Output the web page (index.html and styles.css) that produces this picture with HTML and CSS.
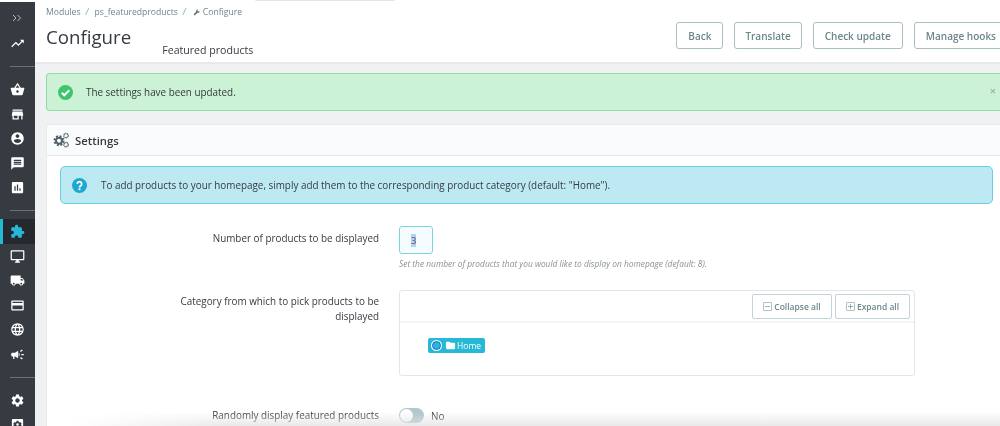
FILE: index.html
```html
<!DOCTYPE html>
<html>
<head>
    <meta charset="UTF-8">
    <title>Configure</title>
    <link rel="stylesheet" href="styles.css">
</head>
<body>
    <div class="app">
        <!-- Sol menu -->
        <nav class="sidebar">
            <div class="nav-item nav-toggle"><svg class="nav-icon nav-icon-line" viewBox="0 0 24 24"><path d="M4 6l6 6-6 6M13 6l6 6-6 6"/></svg></div>
            <div class="nav-item"><svg class="nav-icon" viewBox="0 0 24 24"><path d="M16 6l2.290 2.290-4.880 4.880-4-4L2 16.590 3.410 18l6-6 4 4 6.300-6.290L22 12V6z"/></svg></div>
            <div class="nav-sep"></div>
            <div class="nav-item"><svg class="nav-icon" viewBox="0 0 24 24"><path d="M17.21 9l-4.38-6.56c-.19-.28-.51-.42-.83-.42-.32 0-.64.14-.83.43L6.79 9H2c-.55 0-1 .45-1 1 0 .09.01.18.04.27l2.54 9.27c.23.84 1 1.46 1.92 1.46h13c.92 0 1.69-.62 1.93-1.46l2.54-9.27L23 10c0-.55-.45-1-1-1h-4.79zM9 9l3-4.4L15 9H9zm3 8c-1.1 0-2-.9-2-2s.9-2 2-2 2 .9 2 2-.9 2-2 2z"/></svg></div>
            <div class="nav-item"><svg class="nav-icon" viewBox="0 0 24 24"><path d="M20 4H4v2h16V4zm1 10v-2l-1-5H4l-1 5v2h1v6h10v-6h4v6h2v-6h1zm-9 4H6v-4h6v4z"/></svg></div>
            <div class="nav-item"><svg class="nav-icon" viewBox="0 0 24 24"><path d="M12 2C6.48 2 2 6.48 2 12s4.48 10 10 10 10-4.48 10-10S17.52 2 12 2zm0 3c1.66 0 3 1.34 3 3s-1.34 3-3 3-3-1.34-3-3 1.34-3 3-3zm0 14.2c-2.5 0-4.71-1.28-6-3.22.03-1.99 4-3.08 6-3.08 1.99 0 5.97 1.09 6 3.08-1.29 1.94-3.5 3.22-6 3.22z"/></svg></div>
            <div class="nav-item"><svg class="nav-icon" viewBox="0 0 24 24"><path d="M20 2H4c-1.1 0-1.99.9-1.99 2L2 22l4-4h14c1.1 0 2-.9 2-2V4c0-1.1-.9-2-2-2zm-2 12H6v-2h12v2zm0-3H6V9h12v2zm0-3H6V6h12v2z"/></svg></div>
            <div class="nav-item"><svg class="nav-icon" viewBox="0 0 24 24"><path d="M19 3H5c-1.1 0-2 .9-2 2v14c0 1.1.9 2 2 2h14c1.1 0 2-.9 2-2V5c0-1.1-.9-2-2-2zM9 17H7v-7h2v7zm4 0h-2V7h2v10zm4 0h-2v-4h2v4z"/></svg></div>
            <div class="nav-sep nav-sep-tight"></div>
            <div class="nav-item active"><svg class="nav-icon" viewBox="0 0 24 24"><path d="M20.5 11H19V7c0-1.1-.9-2-2-2h-4V3.5C13 2.12 11.88 1 10.5 1S8 2.12 8 3.5V5H4c-1.1 0-1.99.9-1.99 2v3.8H3.5c1.49 0 2.7 1.21 2.7 2.7s-1.21 2.7-2.7 2.7H2V20c0 1.1.9 2 2 2h3.8v-1.5c0-1.49 1.21-2.7 2.7-2.7 1.49 0 2.7 1.21 2.7 2.7V22H17c1.1 0 2-.9 2-2v-4h1.5c1.38 0 2.5-1.12 2.5-2.5S21.88 11 20.5 11z"/></svg></div>
            <div class="nav-item"><svg class="nav-icon" viewBox="0 0 24 24"><path d="M21 2H3c-1.1 0-2 .9-2 2v12c0 1.1.9 2 2 2h7v2H8v2h8v-2h-2v-2h7c1.1 0 2-.9 2-2V4c0-1.1-.9-2-2-2zm0 14H3V4h18v12z"/></svg></div>
            <div class="nav-item"><svg class="nav-icon" viewBox="0 0 24 24"><path d="M20 8h-3V4H3c-1.1 0-2 .9-2 2v11h2c0 1.66 1.34 3 3 3s3-1.34 3-3h6c0 1.66 1.34 3 3 3s3-1.34 3-3h2v-5l-3-4zM6 18.5c-.83 0-1.5-.67-1.5-1.5s.67-1.5 1.5-1.5 1.5.67 1.5 1.5-.67 1.5-1.5 1.5zm13.5-9l1.96 2.5H17V9.5h2.5zm-1.5 9c-.83 0-1.5-.67-1.5-1.5s.67-1.5 1.5-1.5 1.5.67 1.5 1.5-.67 1.5-1.5 1.5z"/></svg></div>
            <div class="nav-item"><svg class="nav-icon" viewBox="0 0 24 24"><path d="M20 4H4c-1.11 0-1.99.89-1.99 2L2 18c0 1.11.89 2 2 2h16c1.11 0 2-.89 2-2V6c0-1.11-.89-2-2-2zm0 14H4v-6h16v6zm0-10H4V6h16v2z"/></svg></div>
            <div class="nav-item"><svg class="nav-icon" viewBox="0 0 24 24"><path d="M11.99 2C6.47 2 2 6.48 2 12s4.47 10 9.99 10C17.52 22 22 17.52 22 12S17.52 2 11.99 2zm6.93 6h-2.95c-.32-1.25-.78-2.45-1.38-3.56 1.84.63 3.37 1.91 4.33 3.56zM12 4.04c.83 1.2 1.48 2.53 1.91 3.96h-3.82c.43-1.43 1.08-2.76 1.91-3.96zM4.26 14C4.1 13.36 4 12.69 4 12s.1-1.36.26-2h3.38c-.08.66-.14 1.32-.14 2 0 .68.06 1.34.14 2H4.26zm.82 2h2.95c.32 1.25.78 2.45 1.38 3.56-1.84-.63-3.37-1.9-4.33-3.56zm2.95-8H5.08c.96-1.66 2.49-2.93 4.33-3.56C8.81 5.55 8.35 6.75 8.03 8zM12 19.96c-.83-1.2-1.48-2.53-1.91-3.96h3.82c-.43 1.43-1.08 2.76-1.91 3.96zM14.34 14H9.66c-.09-.66-.16-1.32-.16-2 0-.68.07-1.35.16-2h4.68c.09.65.16 1.32.16 2 0 .68-.07 1.34-.16 2zm.25 5.56c.6-1.11 1.06-2.31 1.38-3.56h2.95c-.96 1.65-2.49 2.93-4.33 3.56zM16.36 14c.08-.66.14-1.32.14-2 0-.68-.06-1.34-.14-2h3.38c.16.64.26 1.31.26 2s-.1 1.36-.26 2h-3.38z"/></svg></div>
            <div class="nav-item"><svg class="nav-icon" viewBox="0 0 24 24"><path d="M18 11v2h4v-2h-4zm-2 6.61c.96.71 2.21 1.65 3.2 2.39.4-.53.8-1.07 1.2-1.6-.99-.74-2.24-1.68-3.2-2.4-.4.54-.8 1.08-1.2 1.61zM20.4 5.6c-.4-.53-.8-1.07-1.2-1.6-.99.74-2.24 1.68-3.2 2.4.4.53.8 1.07 1.2 1.6.96-.72 2.21-1.65 3.2-2.4zM4 9c-1.1 0-2 .9-2 2v2c0 1.1.9 2 2 2h1v4h2v-4h1l5 3V6L8 9H4zm11.5 3c0-1.33-.58-2.53-1.5-3.35v6.69c.92-.81 1.5-2.01 1.5-3.34z"/></svg></div>
            <div class="nav-sep"></div>
            <div class="nav-item"><svg class="nav-icon" viewBox="0 0 24 24"><path d="M19.14 12.94c.04-.3.06-.61.06-.94 0-.32-.02-.64-.07-.94l2.03-1.58c.18-.14.23-.41.12-.61l-1.92-3.32c-.12-.22-.37-.29-.59-.22l-2.39.96c-.5-.38-1.03-.7-1.62-.94l-.36-2.54c-.04-.24-.24-.41-.48-.41h-3.84c-.24 0-.43.17-.47.41l-.36 2.54c-.59.24-1.13.57-1.62.94l-2.39-.96c-.22-.08-.47 0-.59.22L2.74 8.87c-.12.21-.08.47.12.61l2.03 1.58c-.05.3-.09.63-.09.94s.02.64.07.94l-2.03 1.58c-.18.14-.23.41-.12.61l1.92 3.32c.12.22.37.29.59.22l2.39-.96c.5.38 1.03.7 1.62.94l.36 2.54c.05.24.24.41.48.41h3.84c.24 0 .44-.17.47-.41l.36-2.54c.59-.24 1.13-.56 1.62-.94l2.39.96c.22.08.47 0 .59-.22l1.92-3.32c.12-.22.07-.47-.12-.61l-2.01-1.58zM12 15.6c-1.98 0-3.6-1.62-3.6-3.6s1.62-3.6 3.6-3.6 3.6 1.62 3.6 3.6-1.62 3.6-3.6 3.6z"/></svg></div>
            <div class="nav-item"><svg class="nav-icon" viewBox="0 0 24 24"><path fill-rule="evenodd" d="M5 3h14c1.100 0 2 .9 2 2v14c0 1.100-.9 2-2 2H5c-1.100 0-2-.9-2-2V5c0-1.100.9-2 2-2zm5.500 3l-.4 2-1.500.9-1.900-.7L5.200 11l1.500 1-1.500 1 1.500 2.800 1.900-.7 1.500.9.400 2h3l.400-2 1.500-.9 1.900.7L18.800 13l-1.500-1 1.500-1-1.500-2.800-1.900.7-1.500-.9-.400-2zM12 10a2 2 0 1 1 0 4 2 2 0 0 1 0-4z"/></svg></div>
        </nav>

        <div class="main">
            <!-- Sayfa basligi -->
            <header class="page-head">
                <div class="head-left">
                    <div class="breadcrumb">
                        <span>Modules</span><i class="crumb-sep">/</i>
                        <span>ps_featuredproducts</span><i class="crumb-sep">/</i>
                        <svg class="wrench" viewBox="0 0 24 24"><path d="M22 5.500l-4 4-3.500-3.500 4-4a6 6 0 0 0-8 7.500L2 18l4 4 8.500-8.500A6 6 0 0 0 22 5.500z"/></svg>
                        <span>Configure</span>
                    </div>
                    <div class="title-row">
                        <h1>Configure</h1>
                        <span class="subtitle">Featured products</span>
                    </div>
                </div>
                <div class="head-actions">
                    <button class="head-btn">Back</button>
                    <button class="head-btn btn-translate">Translate</button>
                    <button class="head-btn">Check update</button>
                    <button class="head-btn">Manage hooks</button>
                </div>
            </header>

            <div class="content">
                <div class="alert-success">
                    <svg class="alert-icon icon-success" viewBox="0 0 24 24"><circle cx="12" cy="12" r="12" fill="#3ec46d"/><path d="M6 12.500l4 4 8-8" fill="none" stroke="#fff" stroke-width="3.200"/></svg>
                    <span>The settings have been updated.</span>
                    <span class="alert-close">×</span>
                </div>

                <section class="panel">
                    <div class="panel-title">
                        <svg class="gears" viewBox="0 0 24 24" fill="none" stroke="#4f6268"><circle cx="9" cy="13" r="6.500" stroke-width="3.500" stroke-dasharray="2.800 2.300"/><circle cx="9" cy="13" r="4.500" stroke-width="3"/><circle cx="19.500" cy="5.500" r="3.200" stroke-width="2.200" stroke-dasharray="1.700 .8"/><circle cx="19.500" cy="19" r="3.200" stroke-width="2.200" stroke-dasharray="1.700 .8"/></svg>
                        <span>Settings</span>
                    </div>
                    <div class="panel-body">
                        <div class="alert-info">
                            <svg class="alert-icon" viewBox="0 0 24 24"><circle cx="12" cy="12" r="12" fill="#1ea7d0"/><path d="M8.500 9.500a3.500 3.500 0 1 1 5.300 3c-1.300.8-1.800 1.300-1.800 2.500" fill="none" stroke="#fff" stroke-width="2.800"/><rect x="10.500" y="16.500" width="3" height="3" fill="#fff"/></svg>
                            <span>To add products to your homepage, simply add them to the corresponding product category (default: "Home").</span>
                        </div>

                        <div class="form-row row-number">
                            <label class="form-label">Number of products to be displayed</label>
                            <div class="form-field">
                                <div class="num-input"><span class="selected">3</span></div>
                                <p class="help">Set the number of products that you would like to display on homepage (default: 8).</p>
                            </div>
                        </div>

                        <div class="form-row row-category">
                            <label class="form-label">Category from which to pick products to be displayed</label>
                            <div class="form-field">
                                <div class="tree">
                                    <div class="tree-toolbar">
                                        <button class="tree-btn btn-collapse"><svg class="tree-btn-icon" viewBox="0 0 14 14" fill="none" stroke="#6c868e"><rect x=".5" y=".5" width="13" height="13" rx="2"/><path d="M3 7h8"/></svg>Collapse all</button>
                                        <button class="tree-btn btn-expand"><svg class="tree-btn-icon" viewBox="0 0 14 14" fill="none" stroke="#6c868e"><rect x=".5" y=".5" width="13" height="13" rx="2"/><path d="M3 7h8M7 3v8"/></svg>Expand all</button>
                                    </div>
                                    <div class="tree-body">
                                        <span class="tree-chip">
                                            <i class="radio"></i>
                                            <svg class="folder" viewBox="0 0 24 24"><path d="M10 4H4c-1.100 0-2 .9-2 2v12c0 1.100.9 2 2 2h16c1.100 0 2-.9 2-2V8c0-1.100-.9-2-2-2h-8z"/></svg>
                                            Home
                                        </span>
                                    </div>
                                </div>
                            </div>
                        </div>

                        <div class="form-row row-random">
                            <label class="form-label">Randomly display featured products</label>
                            <div class="form-field switch-field">
                                <span class="switch"><i class="knob"></i></span>
                                <span>No</span>
                            </div>
                        </div>
                    </div>
                </section>
            </div>
        </div>
    </div>
    <div class="top-arc"></div>
    <div class="bottom-fade"></div>
</body>
</html>
```

FILE: styles.css
```css
/* Genel */
html, body {
    margin: 0;
    height: 426px;
    overflow: hidden;
    background: #fff;
}

body {
    font-family: "Open Sans", sans-serif;
    color: #363a41;
    filter: blur(0.35px);
}

.app {
    display: flex;
    height: 426px;
}

/* Sol menu */
.sidebar {
    width: 35px;
    flex: none;
    margin-top: 2px;
    padding-top: 4px;
    background: #363a41;
    box-sizing: border-box;
    overflow: hidden;
}

.nav-item {
    height: 24.6px;
    display: flex;
    align-items: center;
    justify-content: center;
    padding-right: 1px;
}

.nav-toggle {
    margin-bottom: 1px;
}

.nav-item.active {
    background: #25282d;
    border-left: 3px solid #25b9d7;
    padding-right: 4px;
}

.nav-item.active .nav-icon {
    fill: #25b9d7;
}

.nav-icon {
    width: 15px;
    height: 15px;
    fill: #fff;
}

.nav-icon-line {
    width: 12px;
    height: 12px;
    fill: none;
    stroke: #b9bdc1;
    stroke-width: 2;
}

.nav-sep {
    height: 1px;
    margin: 10px 0 10px 10px;
    background: #6c7177;
}

.nav-sep-tight {
    margin-bottom: 8px;
}

/* Baslik */
.main {
    flex: 1;
    min-width: 0;
    background: #eff1f2;
    overflow: hidden;
}

.page-head {
    height: 64px;
    box-sizing: border-box;
    padding: 6px 0 0 11px;
    display: flex;
    justify-content: space-between;
    background: #fff;
    border-bottom: 2px solid #e6e8e9;
}

.breadcrumb {
    display: flex;
    align-items: center;
    font-size: 8.600px;
    line-height: 12px;
    color: #6c868e;
}

.crumb-sep {
    margin: 0 6px 0 5px;
    color: #70b580;
}

.wrench {
    width: 7px;
    height: 7px;
    margin: 0 3px 0 1px;
    fill: #6c7177;
}

.title-row {
    display: flex;
    align-items: flex-end;
    margin-top: 4px;
}

h1 {
    margin: 0;
    font-size: 18.700px;
    line-height: 30px;
    font-weight: 400;
    color: #363a41;
}

.subtitle {
    margin: 0 0 -5px 31px;
    font-size: 10.600px;
    line-height: 14px;
}

.head-actions {
    display: flex;
    gap: 11px;
    margin: 16px -8px 0 0;
    height: 27px;
}

.head-btn {
    height: 27px;
    padding: 0 11px;
    border: 1px solid #a9bdc2;
    border-radius: 3px;
    background: #fff;
    font: 600 10px "Open Sans", sans-serif;
    color: #6c868e;
    white-space: nowrap;
}

.btn-translate {
    padding: 0 10px;
}

/* Icerik */
.content {
    padding: 9px 0 0 11px;
}

.alert-success {
    height: 38px;
    box-sizing: border-box;
    display: flex;
    align-items: center;
    position: relative;
    padding-left: 11px;
    margin-bottom: 13px;
    background: #cbf2d4;
    border: 1px solid #90dca6;
    border-right: 0;
    border-radius: 4px 0 0 4px;
    font-size: 9.900px;
}

.alert-icon {
    width: 15px;
    height: 15px;
    flex: none;
    margin-right: 14px;
}

.icon-success {
    margin-right: 13px;
}

.alert-close {
    position: absolute;
    right: 4px;
    top: 10px;
    font-size: 11px;
    line-height: 14px;
    font-weight: 700;
    color: #a5b3ae;
}

.panel {
    background: #fff;
    border-left: 1px solid #e8eaeb;
    border-top: 1px solid #e8eaeb;
}

.panel-title {
    height: 30px;
    display: flex;
    align-items: center;
    padding-left: 6px;
    background: #fafbfc;
    border-bottom: 1px solid #e4e8e9;
    font-size: 11.300px;
    font-weight: 600;
}

.gears {
    width: 16px;
    height: 16px;
    margin-right: 6px;
}

.panel-body {
    padding: 10px 7px 20px 13px;
}

.alert-info {
    height: 38px;
    box-sizing: border-box;
    display: flex;
    align-items: center;
    padding-left: 11px;
    background: #bce9f2;
    border: 1px solid #68cfe3;
    border-radius: 5px;
    font-size: 9.900px;
}

/* Form */
.form-row {
    display: flex;
}

.form-label {
    width: 319px;
    flex: none;
    text-align: right;
    font-size: 9.900px;
    line-height: 15px;
    color: #363a41;
}

.form-field {
    margin-left: 20px;
    flex: 1;
}

.row-number {
    margin-top: 22px;
}

.row-number .form-label {
    padding-top: 5px;
}

.num-input {
    width: 34px;
    height: 28px;
    box-sizing: border-box;
    display: flex;
    align-items: center;
    padding-left: 11px;
    background: #f4fcfd;
    border: 1px solid #7cd5e7;
    border-radius: 3px;
    font-size: 9.500px;
}

.selected {
    background: #b4d2f5;
    color: #4a5058;
}

.help {
    margin: 4px 0 0;
    font-size: 8.400px;
    line-height: 11px;
    font-style: italic;
    color: #8a9296;
}

.row-category {
    margin-top: 21px;
}

.row-category .form-label {
    padding: 4px 0 0 100px;
    box-sizing: border-box;
}

.tree {
    width: 516px;
    height: 86px;
    box-sizing: border-box;
    background: #fff;
    border: 1px solid #e3e6e7;
    border-radius: 3px;
}

.tree-toolbar {
    height: 32px;
    box-sizing: border-box;
    display: flex;
    justify-content: flex-end;
    gap: 3px;
    padding: 3px 4px 0 0;
    border-bottom: 2px solid #f4f5f6;
}

.tree-btn {
    height: 25px;
    display: flex;
    align-items: center;
    justify-content: center;
    padding: 0;
    background: #fff;
    border: 1px solid #bfd5dc;
    border-radius: 2px;
    font: 600 8.500px "Open Sans", sans-serif;
    color: #6c868e;
}

.btn-collapse {
    width: 80px;
}

.btn-expand {
    width: 75px;
}

.tree-btn-icon {
    width: 9px;
    height: 9px;
    margin-right: 2px;
}

.tree-body {
    padding: 15px 0 0 28px;
}

.tree-chip {
    width: 57px;
    height: 15px;
    box-sizing: border-box;
    display: flex;
    align-items: center;
    padding-left: 4px;
    background: #25b9d7;
    border-radius: 2px;
    font-size: 8.500px;
    color: #fff;
}

.radio {
    width: 9px;
    height: 9px;
    box-sizing: border-box;
    margin-right: 4px;
    background: #25b9d7;
    border: 1.500px solid #1666e0;
    box-shadow: 0 0 0 1px #fff;
    border-radius: 50%;
}

.folder {
    width: 11px;
    height: 11px;
    margin-right: 1px;
    fill: #fff;
}

.row-random {
    margin-top: 32px;
}

.switch-field {
    display: flex;
    align-items: center;
    font-size: 9.900px;
    height: 15px;
}

.switch {
    width: 25px;
    height: 15px;
    margin-right: 7px;
    padding: 1px;
    box-sizing: border-box;
    background: #b3c7cd;
    border-radius: 8px;
}

.knob {
    display: block;
    width: 13px;
    height: 13px;
    background: #fff;
    border-radius: 50%;
}

/* Ustteki ve alttaki golgeler */
.top-arc {
    position: absolute;
    left: 255px;
    top: 0;
    width: 140px;
    height: 1px;
    background: #dfe9e4;
    border-radius: 0 0 8px 8px;
}

.bottom-fade {
    position: absolute;
    left: 70px;
    right: 0;
    bottom: 0;
    height: 14px;
    background: linear-gradient(to bottom, rgba(225, 225, 225, 0), rgba(225, 225, 225, 0.75));
    -webkit-mask-image: linear-gradient(to right, transparent, #000 160px);
    mask-image: linear-gradient(to right, transparent, #000 160px);
}
```
